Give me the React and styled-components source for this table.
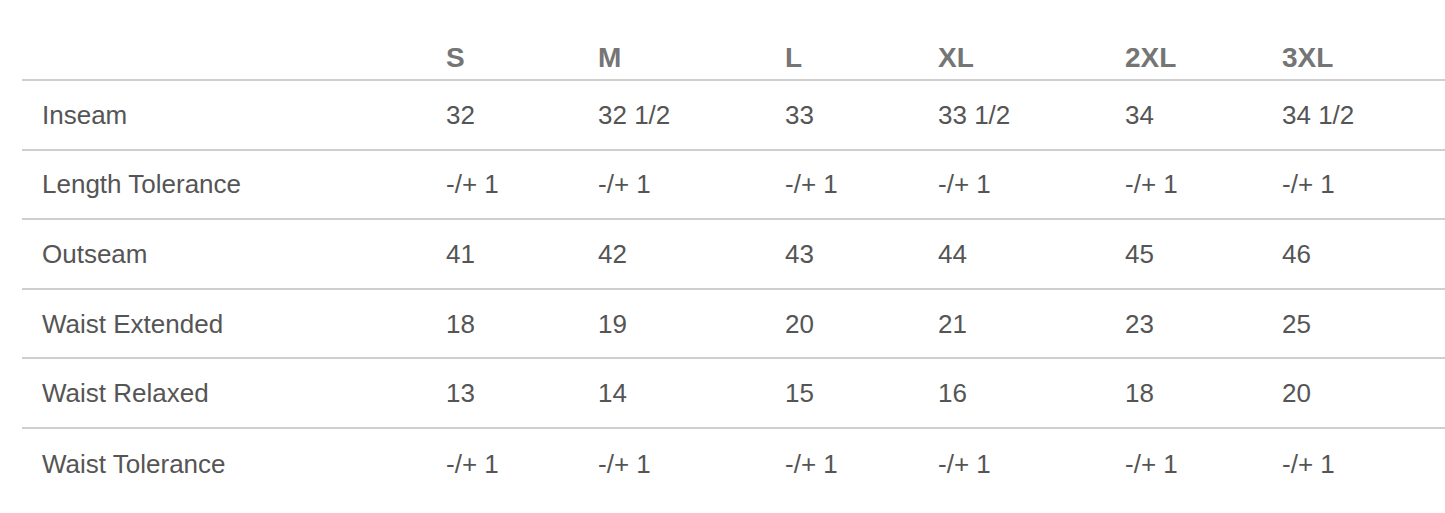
import React from 'react'
import styled, { createGlobalStyle } from 'styled-components'

const GlobalStyle = createGlobalStyle`
  html, body {
    margin: 0;
    padding: 0;
    background: #fff;
  }
  body {
    font-family: 'Liberation Sans', Arial, sans-serif;
  }
`

const Page = styled.div`
  width: 1445px;
  height: 513px;
  overflow: hidden;
  padding-left: 22px;
  box-sizing: border-box;
`

const Table = styled.div`
  width: 1423px;
  display: flex;
  flex-direction: column;
`

const Row = styled.div`
  display: grid;
  grid-template-columns: 404px 152px 187px 153px 187px 157px 1fr;
  box-sizing: border-box;
  height: ${p => (p.$head ? '81px' : '69.6px')};
  padding-top: ${p => (p.$head ? '42px' : '0')};
  align-items: ${p => (p.$head ? 'start' : 'center')};
  border-bottom: ${p => (p.$last ? 'none' : '2px solid #cfcfcf')};
`

const HeadCell = styled.div`
  padding-left: 20px;
  font-size: 28px;
  line-height: 32px;
  font-weight: 700;
  color: #757575;
`

const Cell = styled.div`
  padding-left: 20px;
  font-size: 26px;
  line-height: 30px;
  color: #555;
  white-space: nowrap;
`

const sizes = ['S', 'M', 'L', 'XL', '2XL', '3XL']

const rows = [
  ['Inseam', '32', '32 1/2', '33', '33 1/2', '34', '34 1/2'],
  ['Length Tolerance', '-/+ 1', '-/+ 1', '-/+ 1', '-/+ 1', '-/+ 1', '-/+ 1'],
  ['Outseam', '41', '42', '43', '44', '45', '46'],
  ['Waist Extended', '18', '19', '20', '21', '23', '25'],
  ['Waist Relaxed', '13', '14', '15', '16', '18', '20'],
  ['Waist Tolerance', '-/+ 1', '-/+ 1', '-/+ 1', '-/+ 1', '-/+ 1', '-/+ 1'],
]

export default function App() {
  return (
    <>
      <GlobalStyle />
      <Page>
        <Table>
          <Row $head>
            <HeadCell />
            {sizes.map(s => (
              <HeadCell key={s}>{s}</HeadCell>
            ))}
          </Row>
          {rows.map((r, i) => (
            <Row key={r[0]} $last={i === rows.length - 1}>
              {r.map((c, j) => (
                <Cell key={j}>{c}</Cell>
              ))}
            </Row>
          ))}
        </Table>
      </Page>
    </>
  )
}
